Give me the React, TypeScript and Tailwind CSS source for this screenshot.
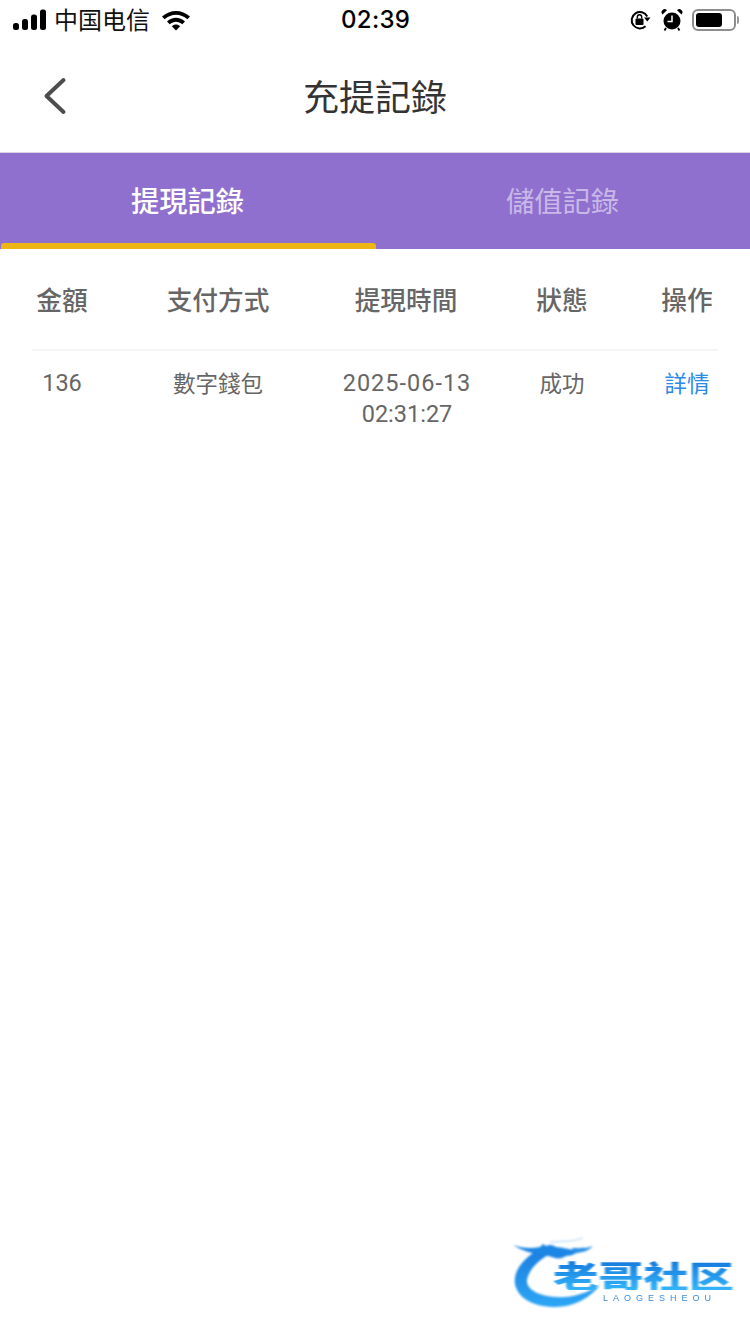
import React from 'react';

const cjk = "font-['Noto_Sans_CJK_TC','Noto_Sans_CJK_SC',sans-serif]";

const columns = ['金額', '支付方式', '提現時間', '狀態', '操作'];
const rowGrid = 'grid grid-cols-[68px_236px_140px_180px_62px]';

const StatusBar = () => (
  <div className="h-10 flex items-center justify-between relative text-black">
    <div className="flex items-center pl-[13px]">
      <svg width="34" height="22" viewBox="0 0 34 22" fill="#000">
        <rect x="0" y="14" width="6" height="7" rx="2.5" />
        <rect x="9" y="10" width="6" height="11" rx="2.5" />
        <rect x="18" y="5.5" width="6" height="15.5" rx="2.5" />
        <rect x="27" y="0.5" width="6" height="20.5" rx="2.5" />
      </svg>
      <span className={`${cjk} text-[24px] leading-none ml-2 -translate-x-px -translate-y-px text-[#111]`}>中国电信</span>
      <svg className="ml-[10px]" width="30" height="22" viewBox="0 0 30 22">
        <path d="M1 7.5 C9 0 21 0 29 7.5 L26.4 10.2 C19.6 4.2 10.4 4.2 3.6 10.2 Z" fill="#000" />
        <path d="M6 12.5 C11.5 7.6 18.5 7.6 24 12.5 L21.3 15.2 C17.3 11.8 12.7 11.8 8.7 15.2 Z" fill="#000" />
        <path d="M10.8 17.2 C13.5 14.9 16.5 14.9 19.2 17.2 L15 21.5 Z" fill="#000" />
      </svg>
    </div>
    <span className="absolute left-[341px] top-[5px] font-['Inter',sans-serif] font-medium text-[24px] leading-[30px] tracking-[0.3px]">02:39</span>
    <div className="flex items-center pr-[11px]">
      <svg width="22" height="22" viewBox="0 0 22 22" className="-translate-x-[2px]">
        <path d="M16.5 17.2 A8.2 8.2 0 1 1 18.2 7.5" fill="none" stroke="#000" strokeWidth="2" />
        <path d="M15 8.5 L21.5 8.5 L18.3 12.5 Z" fill="#000" />
        <rect x="6.5" y="9.5" width="8" height="6.5" rx="1" fill="#000" />
        <path d="M8.3 9.5 V8 A2.2 2.2 0 0 1 12.7 8 V9.5" fill="none" stroke="#000" strokeWidth="1.4" />
      </svg>
      <svg className="ml-[9px] -translate-x-px" width="22" height="24" viewBox="0 0 22 24">
        <circle cx="11" cy="13" r="8.5" fill="#000" />
        <path d="M1.5 6.5 L6 2.2 A3 3 0 0 0 1.5 6.5 Z M20.5 6.5 L16 2.2 A3 3 0 0 1 20.5 6.5 Z" fill="#000" />
        <path d="M11 7.5 V13.5 H6.5" fill="none" stroke="#fff" strokeWidth="1.5" />
        <path d="M5 20 L3.5 22.5 M17 20 L18.5 22.5" stroke="#000" strokeWidth="1.8" />
      </svg>
      <div className="ml-2 w-[44px] h-[22px] rounded-[6px] border-2 border-[#8e8e8e] p-[2px]">
        <div className="w-[26px] h-full rounded-[3px] bg-black" />
      </div>
      <div className="ml-[1px] w-[2px] h-[8px] rounded-r-full bg-[#9a9a9a]" />
    </div>
  </div>
);

const Watermark = () => (
  <div className="absolute left-[510px] top-[1236px] w-[230px] h-[76px]">
    <svg className="absolute left-0 top-0 blur-[0.8px]" width="230" height="76" viewBox="0 0 230 76">
      <defs>
        <linearGradient id="dragon" x1="0" y1="0" x2="0" y2="1">
          <stop offset="0" stopColor="#1a7fe0" />
          <stop offset="1" stopColor="#2da6f5" />
        </linearGradient>
      </defs>
      <path d="M26 15 C12 24 3 36 5 48 C8 64 26 71 46 71 C63 71 80 62 90 49 C76 58 60 62 46 61 C30 60 16 54 17 44 C18 36 26 26 38 19 Z" fill="url(#dragon)" />
      <path d="M3 9 C12 12 20 13 30 11 L33 8 L36 10 C40 8 43 9 46 11 C52 11 60 14 66 14 L74 11 C68 17 62 20 56 20 C52 23 46 23 42 21 L34 19 C24 18 12 15 3 9 Z" fill="#1c86e4" />
      <path d="M62 12 C68 12 76 13 83 10 C78 15 72 17 64 17 Z" fill="#2a8fe6" />
      <path d="M40 6 C52 6 66 5 73 2" fill="none" stroke="#a5d2f4" strokeWidth="1" />
    </svg>
    <span className={`${cjk} absolute left-[43px] top-[24px] inline-block origin-left scale-x-[1.46] font-black text-[31px] leading-[30px] whitespace-nowrap bg-gradient-to-b from-[#1578dc] to-[#35b4f8] bg-clip-text text-transparent blur-[0.6px]`}>老哥社区</span>
    <span className="absolute left-[93px] top-[57px] font-['Liberation_Sans',sans-serif] text-[9px] leading-[10px] tracking-[5px] text-[#3a8fdc] blur-[0.3px] whitespace-nowrap">LAOGESHEOU</span>
  </div>
);

export default function App() {
  return (
    <div className={`${cjk} relative w-[750px] h-[1334px] bg-white overflow-hidden`}>
      <StatusBar />

      <div className="h-[113px] flex items-center justify-center relative border-b border-[#d9d4e2]">
        <svg className="absolute left-[40px] top-[35px]" width="30" height="42" viewBox="0 0 30 42">
          <path d="M23.5 5 L6.5 21 L23.5 37" fill="none" stroke="#4d4d4d" strokeWidth="4" strokeLinecap="round" strokeLinejoin="round" />
        </svg>
        <h1 className="text-[36px] leading-none font-normal text-[#333] -mt-[3px]">充提記錄</h1>
      </div>

      <div className="h-24 bg-[#8f70ce] flex relative">
        <div className="w-[375px] flex justify-center pt-[31px] text-[28.3px] leading-[32px] font-medium text-white">提現記錄</div>
        <div className="w-[375px] flex justify-center pt-[31px] text-[28.3px] leading-[32px] text-[#c9b8e8]">儲值記錄</div>
        <div className="absolute left-[1px] bottom-0 w-[375px] h-[6px] rounded-t-[3px] bg-[#edb614]" />
      </div>

      <div className="px-8">
        <div className={`${rowGrid} h-[102px] border-b-2 border-[#f4f4f4] pt-[32px] text-[25.7px] leading-[36px] font-medium text-[#666]`}>
          {columns.map((c, i) => (
            <div key={c} className={i === 0 || i === 3 ? 'text-center pr-2' : 'text-center'}>{c}</div>
          ))}
        </div>
        <div className={`${rowGrid} pt-[16px] text-[22.5px] leading-[31px] text-[#666]`}>
          <div className="text-center pr-2 pt-[1px] font-['Roboto',sans-serif] text-[23.5px]">136</div>
          <div className="text-center">數字錢包</div>
          <div className="text-center pt-[1px] font-['Roboto',sans-serif] text-[23.5px]">
            <div className="whitespace-nowrap tracking-[1px] translate-x-px">2025-06-13</div>
            <div className="translate-x-px">02:31:27</div>
          </div>
          <div className="text-center pr-2">成功</div>
          <div className="text-center text-[#2a8ae8]">詳情</div>
        </div>
      </div>

      <Watermark />
    </div>
  );
}
